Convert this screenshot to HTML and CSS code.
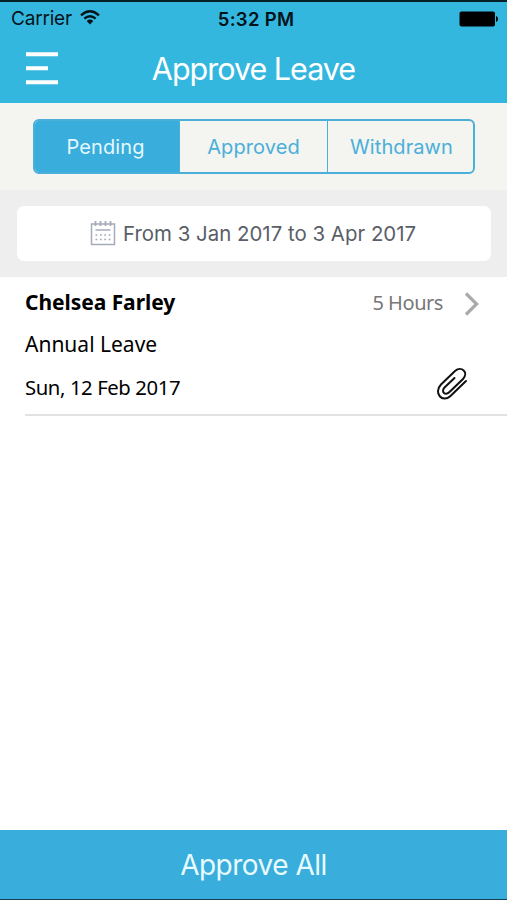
FILE: index.html
```html
<!DOCTYPE html>
<html lang="en">
<head>
<meta charset="utf-8">
<title>Approve Leave</title>
<link rel="stylesheet" href="styles.css">
</head>
<body>
<div class="app">
  <header class="header">
    <div class="status">
      <div class="network"><span class="carrier">Carrier</span>
        <svg class="wifi" width="20" height="15" viewBox="0 0 20 15"><g fill="none" stroke="#06131a" stroke-width="2.4"><path d="M1 5.4Q10-2.8 19 5.4"/><path d="M4.300 8.700Q10 3.600 15.700 8.700"/></g><path d="M6.700 11Q10 8.200 13.300 11L10 14.500Z" fill="#06131a"/></svg>
      </div>
      <span class="time">5:32 PM</span>
      <svg class="battery" width="40" height="16" viewBox="0 0 40 16"><rect x=".5" y=".5" width="35.500" height="15" rx="2" fill="#000"/><path d="M37 5Q39 5.500 39 8T37 11Z" fill="#000"/></svg>
    </div>
    <div class="nav">
      <svg class="menu" width="32" height="34" viewBox="0 0 32 34"><path d="M0 2.300H32M0 16.300H22M0 30.200H32" stroke="#fff" stroke-width="4"/></svg>
      <h1 class="title"><span>Approve Leave</span></h1>
    </div>
  </header>
  <div class="filters">
    <div class="tabs">
      <button class="tab active"><span>Pending</span></button>
      <button class="tab"><span>Approved</span></button>
      <button class="tab last"><span>Withdrawn</span></button>
    </div>
  </div>
  <div class="range">
    <div class="range-box">
      <svg class="calendar" width="26" height="25" viewBox="0 0 26 25"><g fill="none" stroke="#a5abb8" stroke-width="1.500"><path d="M1.500 3H24.500V23.500H1.500Z"/><path d="M5.500 9H20.500"/><path d="M5.500 0V5M10.500 0V5M15.500 0V5M20.500 0V5" stroke-width="1.800"/><path d="M5.500 14H21M5.500 18.500H21" stroke-width="1.600" stroke-dasharray="1.800 2.600"/></g></svg>
      <span class="dates">From 3 Jan 2017 to 3 Apr 2017</span>
    </div>
  </div>
  <main class="list">
    <article class="leave">
      <div class="row"><strong class="name">Chelsea Farley</strong><span class="hours">5 Hours</span>
        <svg class="chevron" width="16" height="24" viewBox="0 0 16 24"><path d="M2 1.500L12.600 12L2 22.500" fill="none" stroke="#aaa" stroke-width="3.200"/></svg>
      </div>
      <div class="row"><span class="type">Annual Leave</span></div>
      <div class="row"><span class="date">Sun, 12 Feb 2017</span>
        <svg class="clip" width="32" height="34" viewBox="0 0 32 34"><path d="M18.500 11L8.500 20.500C4.500 25 9.500 29 13.500 25L27 12C33 5.500 25.500-1.500 19 4L5 17.500C-3 26 6.500 36.500 14.500 29L30 14" fill="none" stroke="#111" stroke-width="2" stroke-linecap="round"/></svg>
      </div>
    </article>
  </main>
  <button class="approve"><span>Approve All</span></button>
</div>
</body>
</html>
```
FILE: styles.css
```css
* { box-sizing: border-box; }
body { margin: 0; font-family: Inter, "Liberation Sans", sans-serif; }
button { font: inherit; margin: 0; padding: 0; border: 0; background: none; }
span, strong { white-space: nowrap; }
.app { height: 900px; display: flex; flex-direction: column; background: #fff; }
.header { height: 103px; border-top: 2px solid #082028; background: #34b7de; }
.status { height: 33px; display: grid; grid-template-columns: 1fr auto 1fr; align-items: center; padding: 0 6px 0 11px; color: #06131a; }
.network { display: flex; align-items: center; gap: 8px; }
.carrier { font-size: 19px; letter-spacing: -.2px; }
.wifi { margin-top: -3px; }
.time { font-size: 18.5px; font-weight: 600; letter-spacing: .3px; color: #03131a; }
.battery { justify-self: end; margin-right: 2px; }
.nav { height: 67px; display: grid; grid-template-columns: 58px 1fr 58px; align-items: center; }
.menu { margin-left: 26px; }
.title { margin: 0; text-align: center; font-size: 30.5px; font-weight: 380; color: #fff; letter-spacing: -1px; line-height: 36px; }
.filters { height: 87px; background: #f4f4f0; padding: 16px 32px 0 33px; }
.tabs { height: 55px; display: grid; grid-template-columns: 144px 148px 1fr; border: 2px solid #4aafd9; border-radius: 6px; overflow: hidden; }
.tab { color: #4aafd9; font-size: 20px; letter-spacing: .1px; border-left: 1.5px solid #4aafd9; }
.tab.active { background: #39addc; color: #e4f8ff; border: 0; padding-right: 3px; }
.tab.last { padding-left: 2px; }
.range { height: 87px; background: #eee; padding: 16px 16px 0 17px; }
.range-box { height: 55px; border-radius: 7px; background: #fff; display: flex; align-items: center; padding-left: 73px; gap: 7px; color: #595e67; font-size: 20.4px; letter-spacing: .02px; }
.list { flex: 1; font-family: "Noto Sans", "Open Sans", sans-serif; color: #000; }
.leave { height: 139px; margin-left: 25px; border-bottom: 2px solid #e2e2e2; padding-top: 4px; }
.row { height: 42px; display: flex; align-items: center; font-size: 21px; }
.row:last-child { height: 43px; }
.name { letter-spacing: -.05px; }
.hours { margin-left: auto; margin-right: 21px; color: #777; font-size: 20px; letter-spacing: -.45px; }
.chevron { margin-right: 27px; margin-top: 4px; }
.date { font-size: 20.3px; letter-spacing: -.4px; }
.clip { margin-left: auto; margin-right: 39px; margin-top: -6px; }
.approve { height: 70px; background: #39addc; color: #e8fbff; font-size: 28px; font-weight: 380; letter-spacing: -.5px; border-bottom: 1px solid #123f52; }
```
